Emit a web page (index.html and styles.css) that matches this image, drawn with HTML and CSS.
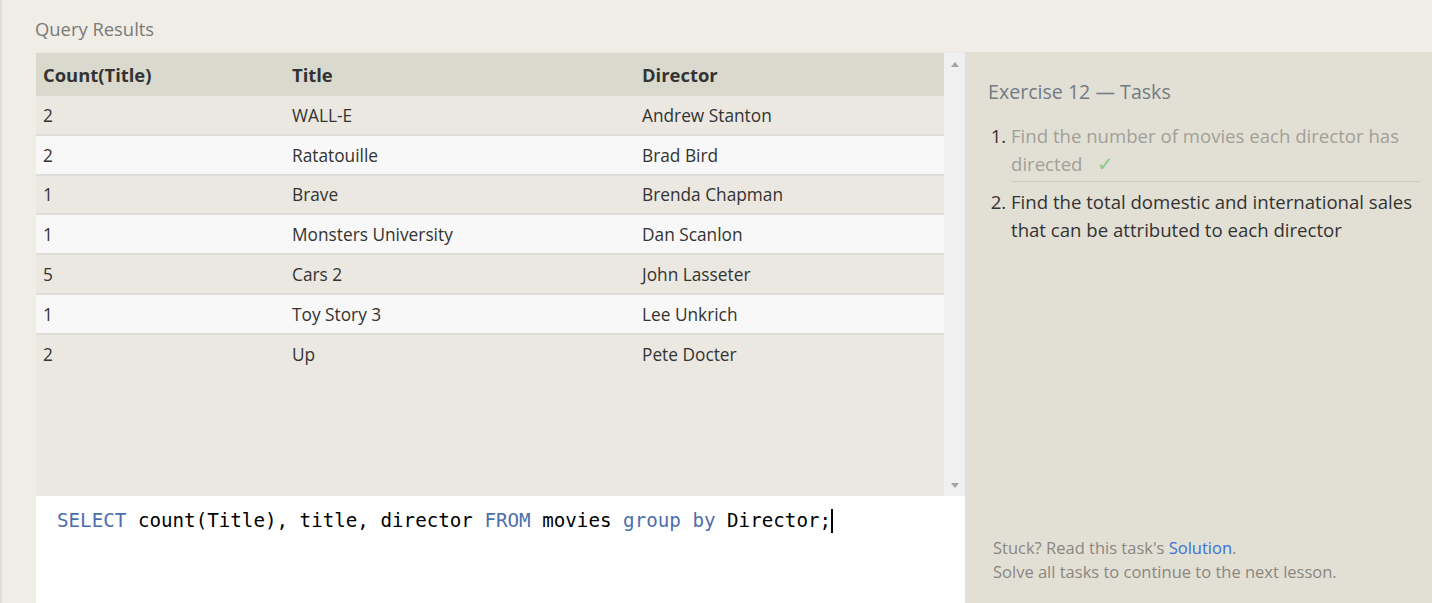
FILE: index.html
```html
<!DOCTYPE html>
<html>
<head>
<meta charset="utf-8">
<link rel="stylesheet" href="styles.css">
</head>
<body>
<div class="page">
  <div class="section-title">Query Results</div>
  <div class="main">
    <div class="results">
      <div class="table-wrap">
        <div class="table-area">
          <table class="grid">
            <thead>
              <tr><th class="c1">Count(Title)</th><th class="c2">Title</th><th class="c3">Director</th></tr>
            </thead>
            <tbody>
              <tr><td>2</td><td>WALL-E</td><td>Andrew Stanton</td></tr>
              <tr><td>2</td><td>Ratatouille</td><td>Brad Bird</td></tr>
              <tr><td>1</td><td>Brave</td><td>Brenda Chapman</td></tr>
              <tr><td>1</td><td>Monsters University</td><td>Dan Scanlon</td></tr>
              <tr><td>5</td><td>Cars 2</td><td>John Lasseter</td></tr>
              <tr><td>1</td><td>Toy Story 3</td><td>Lee Unkrich</td></tr>
              <tr><td>2</td><td>Up</td><td>Pete Docter</td></tr>
            </tbody>
          </table>
        </div>
        <div class="scrollbar">
          <span class="arrow up"></span>
          <span class="arrow down"></span>
        </div>
      </div>
      <div class="editor">
        <div class="code"><span class="kw">SELECT</span> <span class="fn">count</span>(Title), title, director <span class="kw">FROM</span> movies <span class="kw">group</span> <span class="kw">by</span> Director;<span class="cursor"></span></div>
      </div>
    </div>
    <div class="tasks">
      <div class="tasks-title">Exercise 12 — Tasks</div>
      <ol class="task-list">
        <li class="done">Find the number of movies each director has directed<span class="check">✓</span></li>
        <li>Find the total domestic and international sales that can be attributed to each director</li>
      </ol>
      <div class="tasks-footer">
        <div>Stuck? Read this task's <a class="link" href="#">Solution</a>.</div>
        <div>Solve all tasks to continue to the next lesson.</div>
      </div>
    </div>
  </div>
</div>
</body>
</html>
```

FILE: styles.css
```css
html, body {
  margin: 0;
  padding: 0;
  height: 100%;
}
body {
  background: #f0ede6;
  font-family: "Open Sans", "Noto Sans", sans-serif;
  color: #333;
  border-left: 2px solid #e2dfd8;
  box-sizing: border-box;
  overflow: hidden;
}
.page {
  display: flex;
  flex-direction: column;
  height: 603px;
}
.section-title {
  height: 52px;
  padding-left: 33px;
  font-size: 18.4px;
  line-height: 58px;
  color: #7a7a7a;
  box-sizing: border-box;
}
.main {
  display: flex;
  flex: 1;
  min-height: 0;
  padding-left: 34px;
}
.results {
  width: 929px;
  display: flex;
  flex-direction: column;
}
.table-wrap {
  display: flex;
  height: 444px;
  border-top: 1px solid #ebe9e3;
  box-sizing: border-box;
  background: #eae8e1;
}
.table-area {
  width: 908px;
  background: #eae8e1;
}
.grid {
  width: 100%;
  border-collapse: collapse;
  table-layout: fixed;
}
.grid th {
  box-sizing: border-box;
  background: #dad9cd;
  font-weight: 700;
  font-size: 18.4px;
  text-align: left;
  height: 43px;
  padding: 0 0 0 7px;
  color: #333;
}
.grid th.c1 { width: 249px; }
.grid th.c2 { width: 350px; }
.grid td {
  font-size: 17.3px;
  height: 36.8px;
  padding: 1px 0 0 7px;
  color: #333;
  border-bottom: 2px solid #dfddd7;
}
.grid tbody tr:nth-child(odd) td { background: #eae8e1; }
.grid tbody tr:nth-child(even) td { background: #f8f8f8; }
.grid tbody tr:last-child td { border-bottom: none; }
.scrollbar {
  width: 21px;
  background: #f0f0f0;
  display: flex;
  flex-direction: column;
  justify-content: space-between;
  align-items: center;
  padding: 9px 0 8px;
  box-sizing: border-box;
}
.arrow {
  width: 0;
  height: 0;
  border-left: 4px solid transparent;
  border-right: 4px solid transparent;
}
.arrow.up { border-bottom: 5px solid #a3a3a3; }
.arrow.down { border-top: 5px solid #a3a3a3; }
.editor {
  flex: 1;
  background: #fff;
  padding: 13px 0 0 21px;
}
.code {
  font-family: "DejaVu Sans Mono", "Liberation Mono", monospace;
  font-size: 19.2px;
  line-height: 24px;
  color: #000;
  white-space: pre;
}
.kw { color: #4d6ead; }
.fn { color: #000; }
.cursor {
  display: inline-block;
  width: 2px;
  height: 24px;
  background: #000;
  vertical-align: top;
}
.tasks {
  flex: 1;
  background: #e2dfd5;
  display: flex;
  flex-direction: column;
  padding: 0 12px 19px 23px;
}
.tasks-title {
  font-size: 19.6px;
  color: #737b85;
  margin-top: 26px;
  line-height: 28px;
}
.task-list {
  margin: 16px 0 0 0;
  padding-left: 23px;
  font-size: 18.6px;
  line-height: 28px;
  color: #333;
}
.task-list li {
  padding: 0;
}
.task-list li.done {
  color: #a29f98;
  border-bottom: 1px solid #cfccc3;
  padding-bottom: 3px;
  margin-bottom: 6px;
}
.task-list li.done::marker { color: #333; }
.check {
  display: inline-block;
  color: #8cc98c;
  font-size: 20px;
  line-height: 28px;
  margin-left: 15px;
}
.tasks-footer {
  margin-top: auto;
  padding-left: 5px;
  font-size: 16.5px;
  line-height: 24px;
  color: #8a8781;
}
.link {
  color: #3d70d6;
  text-decoration: none;
}
```
